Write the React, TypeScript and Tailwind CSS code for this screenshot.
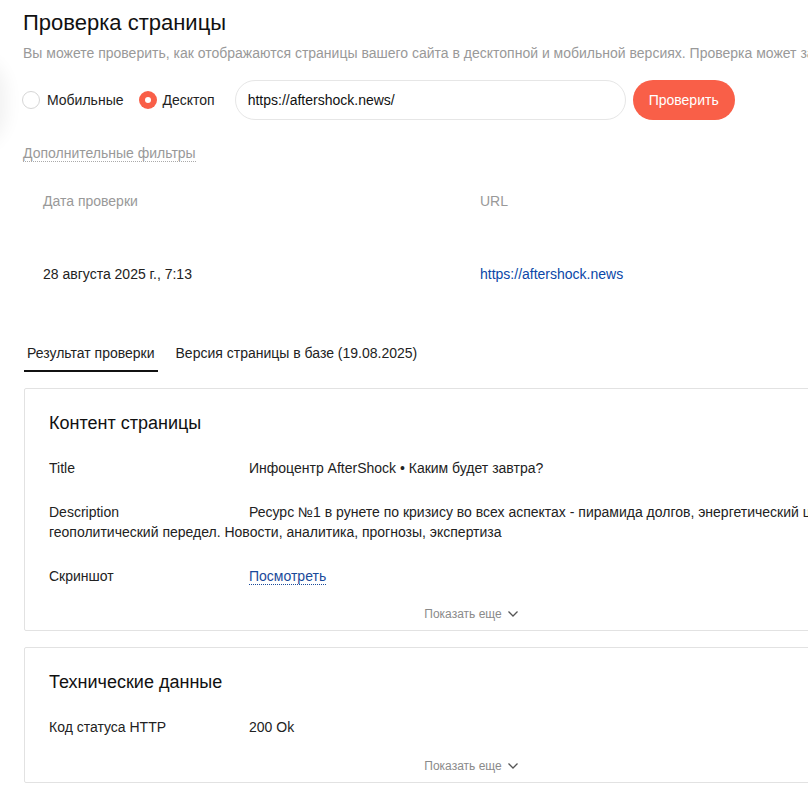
import React from "react";

const ShowMore = () => (
  <div className="flex items-center justify-center gap-1 text-[12px] leading-4 text-[#8a8a8a]">
    <span>Показать еще</span>
    <svg width="14" height="14" viewBox="0 0 14 14" fill="none">
      <path d="M2.5 4.5 7 9l4.5-4.5" stroke="#555" strokeWidth="1.3" />
    </svg>
  </div>
);

const Row = ({ label, children }: { label: string; children: React.ReactNode }) => (
  <div className="text-[14px] leading-5 text-[#222]">
    <span className="inline-block w-[200px]">{label}</span>
    {children}
  </div>
);

export default function App() {
  return (
    <div
      className="relative h-[790px] w-[808px] overflow-hidden bg-white"
      style={{ fontFamily: '"Liberation Sans", Arial, sans-serif' }}
    >
      {/* faint edge shadow of a side panel */}
      <div className="absolute left-[-60px] top-[62px] h-[80px] w-[60px] rounded-full shadow-[0_0_18px_6px_rgba(0,0,0,0.06)]" />

      <div className="w-[920px] pl-6">
        <h1 className="pt-[9px] text-[22px] leading-7 text-[#111] -ml-px">Проверка страницы</h1>
        <p className="mt-[6px] whitespace-nowrap text-[14px] leading-5 text-[#999] -ml-px">
          Вы можете проверить, как отображаются страницы вашего сайта в десктопной и мобильной версиях. Проверка может занять некоторое время.
        </p>

        <div className="mt-[17px] flex items-center -ml-[2px]">
          <label className="flex items-center gap-[7px] text-[14px] text-[#222]">
            <span className="h-[18px] w-[18px] rounded-full border border-[#d6d6d6] bg-white" />
            Мобильные
          </label>
          <label className="ml-[15px] flex items-center gap-[6px] text-[14px] text-[#222]">
            <span className="flex h-[18px] w-[18px] items-center justify-center rounded-full bg-[#f95f48]">
              <span className="h-[6px] w-[6px] rounded-full bg-white" />
            </span>
            Десктоп
          </label>
          <div className="ml-[20px] flex h-10 w-[391px] items-center rounded-full border border-[#e6e6e6] px-3 text-[14px] text-[#111]">
            https://aftershock.news/
          </div>
          <button className="ml-[7px] h-10 w-[102px] rounded-full bg-[#f95f48] text-[14px] text-white">
            Проверить
          </button>
        </div>

        <div className="mt-[21px] -ml-px">
          <span className="border-b border-dotted border-[#aaa] text-[14px] leading-5 text-[#999]">
            Дополнительные фильтры
          </span>
        </div>

        <div className="mt-[26px] grid grid-cols-[437px_1fr] pl-[19px] text-[14px] leading-5">
          <div className="text-[#999]">Дата проверки</div>
          <div className="text-[#999]">URL</div>
          <div className="mt-[53px] text-[#222]">28 августа 2025 г., 7:13</div>
          <div className="mt-[53px] text-[#0a47a8]">https://aftershock.news</div>
        </div>

        <div className="mt-[59px] flex gap-[18px] text-[14px] leading-5">
          <div className="border-b-2 border-[#111] px-[3px] pb-[7px] text-[#222]">Результат проверки</div>
          <div className="px-0 pb-[7px] text-[#222]">Версия страницы в базе (19.08.2025)</div>
        </div>

        <div className="mt-[16px] rounded-[2px] border border-[#e2e2e2] pl-6 pr-6 pt-[22px] pb-[8px]">
          <h2 className="text-[18px] leading-6 text-[#111]">Контент страницы</h2>
          <div className="mt-[23px] flex flex-col gap-[24px]">
            <Row label="Title">Инфоцентр AfterShock • Каким будет завтра?</Row>
            <Row label="Description">
              Ресурс №1 в рунете по кризису во всех аспектах - пирамида долгов, энергетический цугцванг, геополитический передел. Новости, аналитика, прогнозы, экспертиза
            </Row>
            <Row label="Скриншот">
              <span className="border-b border-dotted border-[#1a4a9a] text-[#1a4a9a]">Посмотреть</span>
            </Row>
          </div>
          <div className="mt-[20px]">
            <ShowMore />
          </div>
        </div>

        <div className="mt-[16px] rounded-[2px] border border-[#e2e2e2] pl-6 pr-6 pt-[22px] pb-[8px]">
          <h2 className="text-[18px] leading-6 text-[#111]">Технические данные</h2>
          <div className="mt-[23px]">
            <Row label="Код статуса HTTP">200 Ok</Row>
          </div>
          <div className="mt-[21px]">
            <ShowMore />
          </div>
        </div>
      </div>
    </div>
  );
}
